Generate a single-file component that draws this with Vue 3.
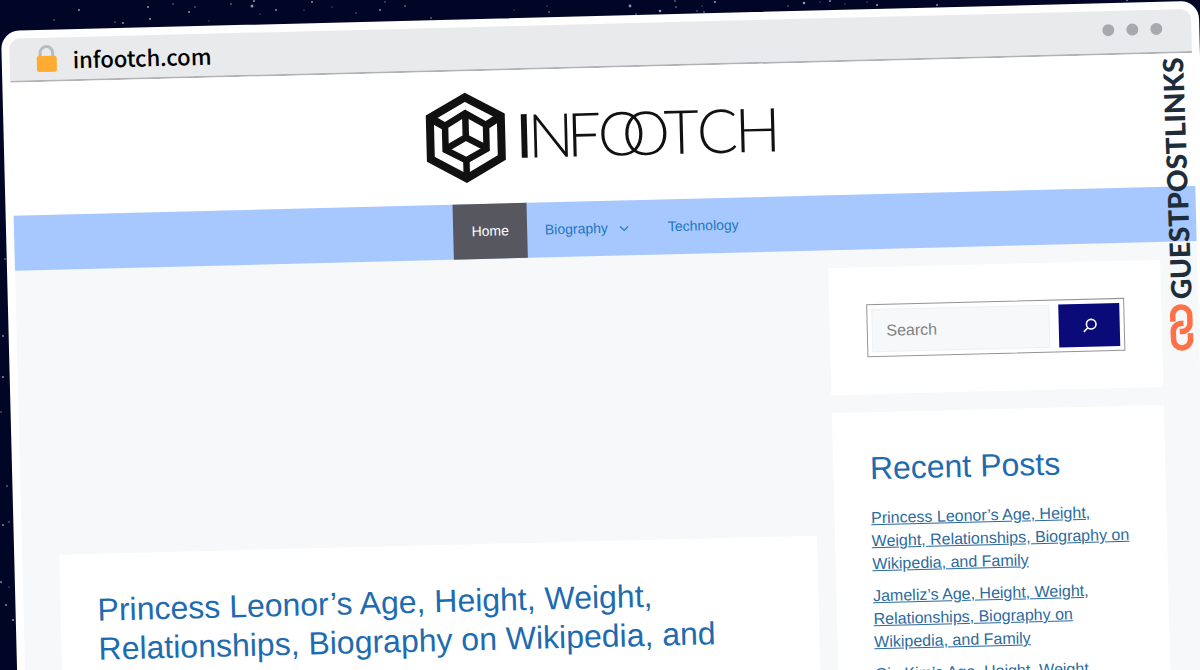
<script setup>
import { ref } from 'vue'

const query = ref('')

const stars = [
  [79, 10, 1], [54, 20, 0.7], [115, 22, 0.7], [123, 23, 1], [150, 19, 1], [173, 4, 0.7], [148, 7, 1],
  [189, 12, 1], [195, 7, 0.7], [231, 4, 0.8], [252, 6, 1.5], [254, 1, 1], [276, 10, 1], [209, 21, 0.6],
  [260, 14, 0.6], [304, 10, 0.6], [312, 2, 1], [332, 7, 0.6], [356, 13, 0.7], [380, 10, 1], [385, 2, 0.7],
  [405, 6, 0.8], [431, 18, 0.8], [514, 10, 0.5], [547, 6, 0.6], [549, 12, 0.8],
  [630, 6, 1.4], [675, 1, 0.8], [676, 7, 0.8], [715, 2, 1], [660, 11, 1.3], [636, 14, 0.8], [697, 11, 0.7],
  [704, 12, 0.8], [702, 6, 0.6], [788, 6, 0.7], [804, 3, 1.3], [830, 1, 1], [820, 2, 0.6], [845, 4, 0.6],
  [877, 5, 1.1], [867, 2, 0.6], [937, 5, 0.9], [1127, 0, 1], [3, 336, 0.9], [3, 377, 1], [1, 412, 0.7],
  [7, 486, 0.8], [3, 525, 0.9], [9, 522, 0.7], [1, 582, 0.9], [6, 605, 0.9], [13, 620, 1.1], [9, 587, 0.6],
  [5, 259, 0.8]
]

const posts = [
  'Princess Leonor’s Age, Height, Weight, Relationships, Biography on Wikipedia, and Family',
  'Jameliz’s Age, Height, Weight, Relationships, Biography on Wikipedia, and Family',
  'Gia Kim’s Age, Height, Weight, Relationships, Biography on Wikipedia, and Family'
]
</script>

<template>
  <div class="scene">
    <svg class="stars" aria-hidden="true">
      <circle v-for="(s, i) in stars" :key="i" :cx="s[0]" :cy="s[1]" :r="s[2]" />
    </svg>

    <div class="browser">
      <div class="bar">
        <svg class="lock" viewBox="0 0 22 28" aria-hidden="true">
          <path d="M4.500 13V8a6.300 6.300 0 0 1 12.600 0v5" fill="none" stroke="#b4bcc6" stroke-width="3" />
          <rect x="1" y="11" width="20" height="16" rx="2" fill="#ffac33" />
        </svg>
        <span class="url">infootch.com</span>
        <span class="dots"><i></i><i></i><i></i></span>
      </div>

      <div class="page">
        <header class="site-header">
          <a class="logo" href="#" aria-label="Infootch">
            <svg viewBox="0 0 352 92">
              <g fill="none" stroke="#111">
                <path d="M39 6 74.500 25.500V67L39 87 3.500 67V25.500Z" stroke-width="8" />
                <path d="M39 22 59.500 34V58L39 69 18.500 58V34Z" stroke-width="6.500" />
                <path d="M39 22V47M39 46 19 57M39 46 59 57M39 69V87" stroke-width="6.500" />
                <path d="M59 35 74 26M19 35 4 26" stroke-width="8" />
              </g>
              <text y="68" x="89 101 140 171 195 237 270 308"><tspan class="stem">I</tspan>NFOOTCH</text>
            </svg>
          </a>
        </header>

        <nav class="menu">
          <a class="current" href="#">Home</a>
          <a href="#">Biography
            <svg viewBox="0 0 10 6" aria-hidden="true"><path d="M1 1l4 4 4-4" fill="none" stroke="currentColor" stroke-width="1.200" /></svg>
          </a>
          <a href="#">Technology</a>
        </nav>

        <div class="columns">
          <main>
            <article class="card">
              <h2><a href="#">Princess Leonor’s Age, Height, Weight, Relationships, Biography on Wikipedia, and Family</a></h2>
            </article>
          </main>
          <aside>
            <section class="card">
              <form class="search" @submit.prevent>
                <input v-model="query" type="search" placeholder="Search" aria-label="Search">
                <button type="submit" aria-label="Search">
                  <svg viewBox="0 0 16 16" aria-hidden="true"><circle cx="9.500" cy="6.500" r="4.800" /><path d="M6 10 2 14" /></svg>
                </button>
              </form>
            </section>
            <section class="card">
              <h2>Recent Posts</h2>
              <ul>
                <li v-for="post in posts" :key="post"><a href="#">{{ post }}</a></li>
              </ul>
            </section>
          </aside>
        </div>
      </div>

      <div class="brand">
        <span>GUESTPOSTLINKS</span>
        <svg viewBox="0 0 24 48" aria-hidden="true">
          <g fill="none" stroke="#ff7148" stroke-width="5.500">
            <path d="M3.500 18V12a8.500 8.500 0 0 1 17 0v8a8 8 0 0 1-8 8H10" />
            <path d="M20.500 30v6a8.500 8.500 0 0 1-17 0v-8a8 8 0 0 1 8-8H14" />
          </g>
        </svg>
      </div>
    </div>
  </div>
</template>

<style>
body {
  margin: 0;
  background: #020626;
}
</style>

<style scoped>
* {
  box-sizing: border-box;
}

.scene {
  position: relative;
  height: 100vh;
  overflow: hidden;
  padding-top: 31px;
  background: #020626;
  font-family: "Liberation Sans", Arial, sans-serif;
}

.stars {
  position: absolute;
  inset: 0;
  width: 100%;
  height: 100%;
  fill: #8e94ae;
}

.browser {
  position: relative;
  width: calc(100% - 2px);
  min-height: 110vh;
  margin-left: 1px;
  border: 8px solid #fff;
  border-radius: 18px;
  background: #f6f8fa;
  transform: rotate(-1.44deg);
  transform-origin: 0 0;
}

.bar {
  display: flex;
  align-items: center;
  height: 44px;
  padding: 0 29px 0 26px;
  border-bottom: 2px solid #b0b2b6;
  border-radius: 10px 10px 0 0;
  background: #e8eaec;
}

.lock {
  width: 22px;
  height: 28px;
}

.url {
  margin-left: 15px;
  font: 500 22px/36px "Noto Sans CJK SC", "Noto Sans", sans-serif;
  color: #000;
}

.dots {
  display: flex;
  gap: 12px;
  margin: 0 0 4px auto;
}

.dots i {
  width: 12px;
  height: 12px;
  border-radius: 50%;
  background: #a7a9ac;
}

.site-header {
  display: flex;
  justify-content: center;
  padding: 20px 0 21px;
  background: #fff;
}

.logo svg {
  display: block;
  width: 352px;
  height: 92px;
  overflow: visible;
}

.logo text {
  font: 300 61px Lato, sans-serif;
  fill: #111;
}

.logo .stem {
  font-weight: 400;
}

.menu {
  display: flex;
  justify-content: center;
  background: #a6c8ff;
}

.menu a {
  display: flex;
  align-items: center;
  padding: 0 18px;
  font-size: 14px;
  line-height: 55px;
  color: #2277bf;
  text-decoration: none;
}

.menu .current {
  background: #575760;
  color: #fff;
}

.menu svg {
  width: 10px;
  height: 6px;
  margin: 0 3px 0 11px;
}

.columns {
  display: grid;
  grid-template-columns: minmax(0, 1fr) 30%;
  gap: 18px;
  max-width: 1108px;
  margin: 0 auto;
  padding-top: 18px;
}

main {
  padding-top: 267px;
}

aside {
  display: grid;
  grid-template-columns: minmax(0, 1fr);
  gap: 18px;
  align-content: start;
}

.card {
  padding: 37px;
  background: #fff;
}

h2 {
  margin: 0;
  font-size: 32px;
  font-weight: 400;
  line-height: 39px;
  color: #1e6bb0;
}

h2 a {
  color: inherit;
  text-decoration: none;
}

.search {
  display: flex;
  gap: 9px;
  padding: 4px;
  border: 1px solid #949494;
}

.search input {
  flex: 1;
  min-width: 0;
  height: 43px;
  padding: 0 14px;
  border: 1px solid #eff1f3;
  border-radius: 0;
  background: #f6f8fa;
  font: 16px "Liberation Sans", Arial, sans-serif;
  color: #444;
  appearance: none;
}

.search input::placeholder {
  color: #808284;
}

.search button {
  display: grid;
  place-items: center;
  width: 61px;
  padding: 0;
  border: 0;
  background: #0a0a78;
}

.search button svg {
  width: 16px;
  height: 16px;
  fill: none;
  stroke: #fff;
  stroke-width: 1.6;
}

ul {
  margin: 18px 0 0;
  padding: 0;
  list-style: none;
}

li {
  margin-bottom: 9px;
  font-size: 16px;
  line-height: 23px;
}

li a {
  color: #2a6a9e;
}

.brand {
  position: absolute;
  top: 48px;
  right: 4px;
  display: flex;
  flex-direction: column;
  align-items: center;
  gap: 4px;
  transform: rotate(-0.6deg);
  transform-origin: 50% 0;
}

.brand span {
  writing-mode: vertical-rl;
  rotate: 180deg;
  font: 900 28px/32px Lato, sans-serif;
  color: #1f2d3a;
}

.brand svg {
  width: 24px;
  height: 48px;
}
</style>
